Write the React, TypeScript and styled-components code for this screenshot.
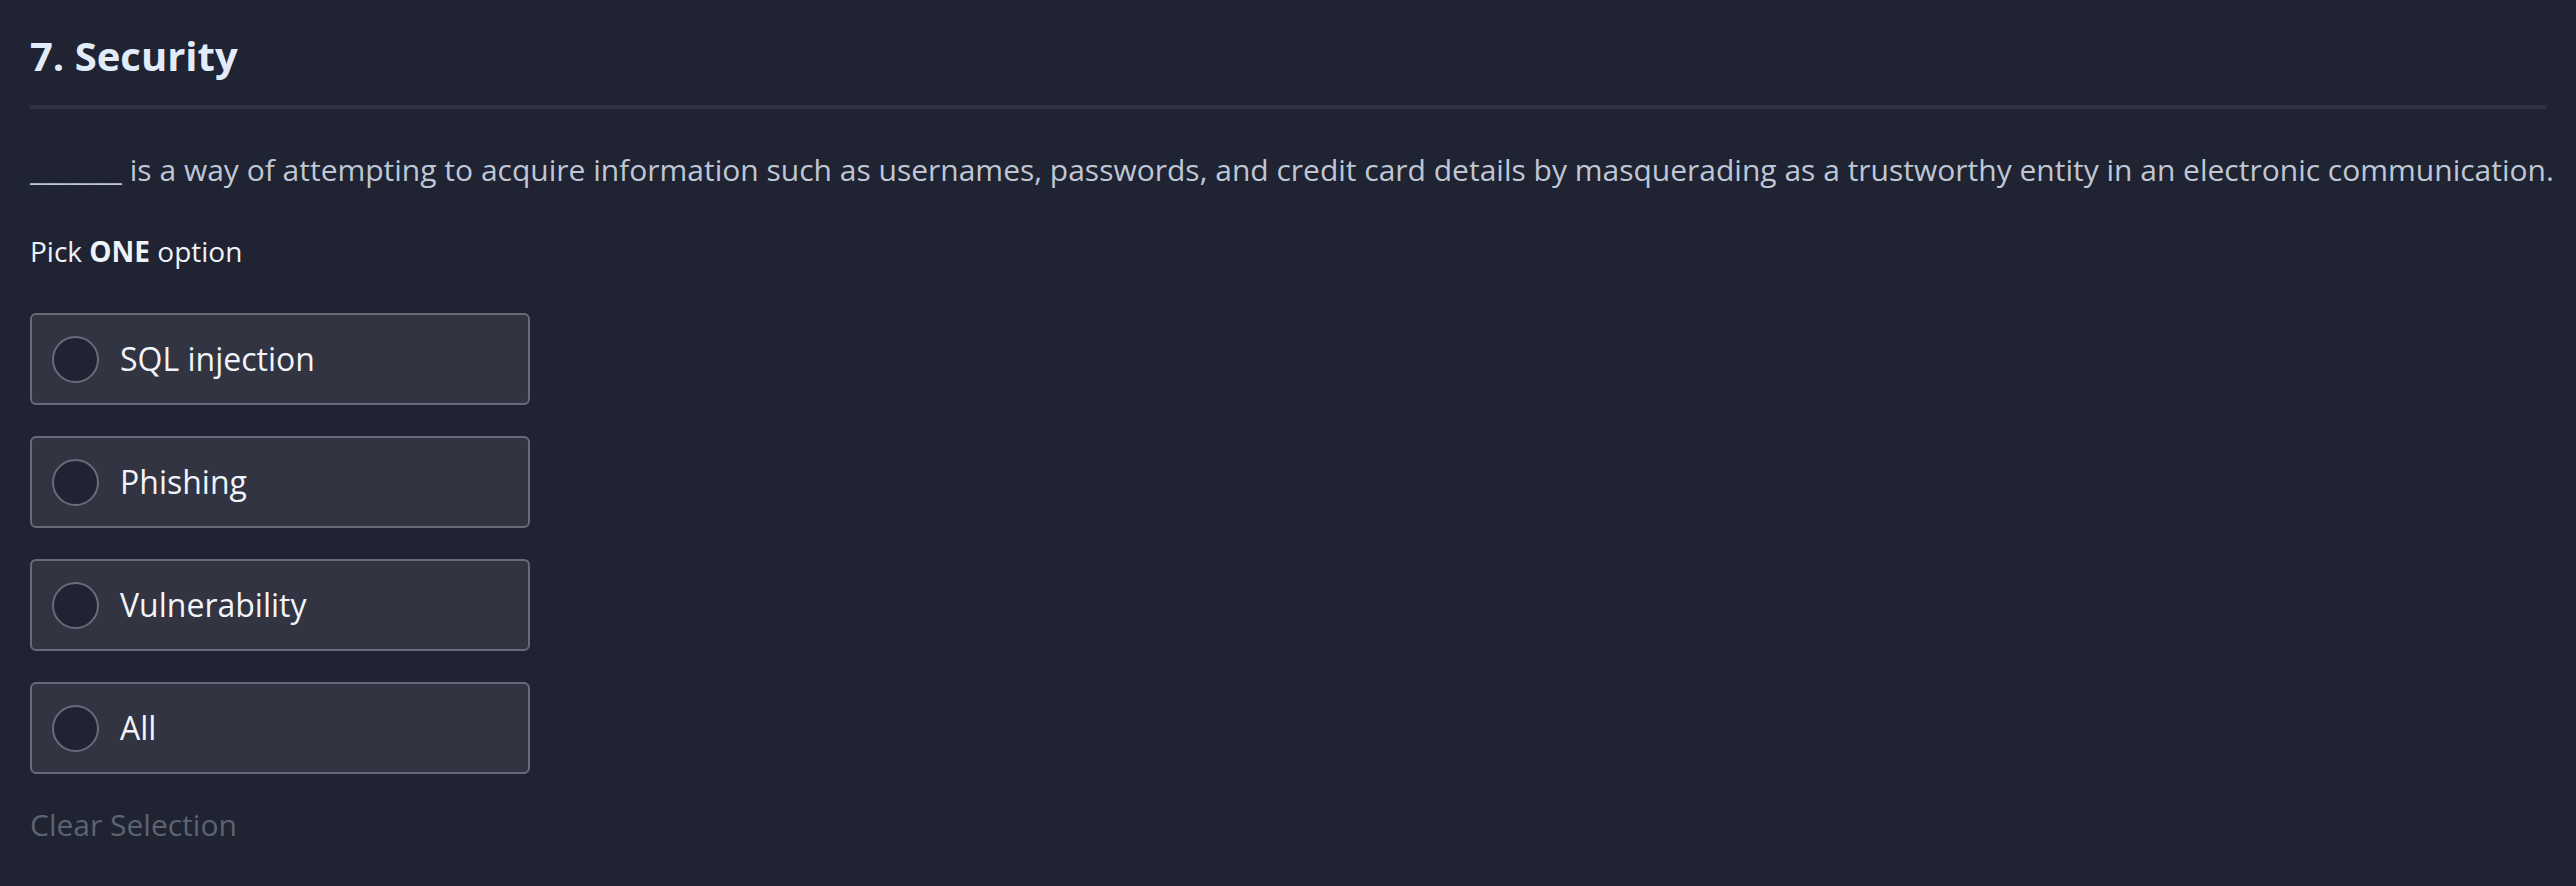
import React from "react";
import styled, { createGlobalStyle } from "styled-components";

const Global = createGlobalStyle`
  html, body {
    margin: 0;
    padding: 0;
    background: #1f2332;
  }
  body {
    font-family: "Open Sans", "Noto Sans", sans-serif;
  }
`;

const Page = styled.main`
  display: flex;
  flex-direction: column;
  padding: 0 30px;
  min-height: 886px;
  box-sizing: border-box;
`;

const Title = styled.h2`
  margin: 0;
  padding-top: 32px;
  padding-bottom: 25px;
  font-size: 40px;
  line-height: 48px;
  font-weight: 700;
  color: #e2ebf9;
  border-bottom: 4px solid #2f323f;
`;

const Question = styled.p`
  margin: 41px 0 0;
  font-size: 30px;
  line-height: 40px;
  color: #bfc7d5;
  white-space: nowrap;
`;

const Instruction = styled.p`
  margin: 41px 0 0;
  font-size: 28px;
  line-height: 40px;
  color: #eef2f9;
  b {
    font-weight: 700;
  }
`;

const Options = styled.div`
  display: flex;
  flex-direction: column;
  gap: 31px;
  margin-top: 42px;
`;

const Option = styled.label`
  display: flex;
  align-items: center;
  gap: 21px;
  width: 500px;
  height: 92px;
  box-sizing: border-box;
  padding: 0 20px;
  background: #323541;
  border: 2px solid #666b7a;
  border-radius: 6px;
  cursor: pointer;
`;

const Radio = styled.span`
  width: 47px;
  height: 47px;
  box-sizing: border-box;
  border-radius: 50%;
  border: 2px solid #676c7b;
  background: #1f2332;
  flex: none;
`;

const OptionText = styled.span`
  font-size: 32px;
  line-height: 40px;
  color: #f1f4fa;
`;

const Clear = styled.button`
  align-self: flex-start;
  margin-top: 31px;
  padding: 0;
  background: none;
  border: none;
  font-family: inherit;
  font-size: 30px;
  line-height: 40px;
  color: #5e6370;
  cursor: pointer;
`;

const options = ["SQL injection", "Phishing", "Vulnerability", "All"];

export default function App() {
  return (
    <>
      <Global />
      <Page>
        <Title>7. Security</Title>
        <Question>
          _______ is a way of attempting to acquire information such as usernames, passwords, and credit card details by masquerading as a trustworthy entity in an electronic communication.
        </Question>
        <Instruction>
          Pick <b>ONE</b> option
        </Instruction>
        <Options>
          {options.map((o) => (
            <Option key={o}>
              <Radio />
              <OptionText>{o}</OptionText>
            </Option>
          ))}
        </Options>
        <Clear>Clear Selection</Clear>
      </Page>
    </>
  );
}
